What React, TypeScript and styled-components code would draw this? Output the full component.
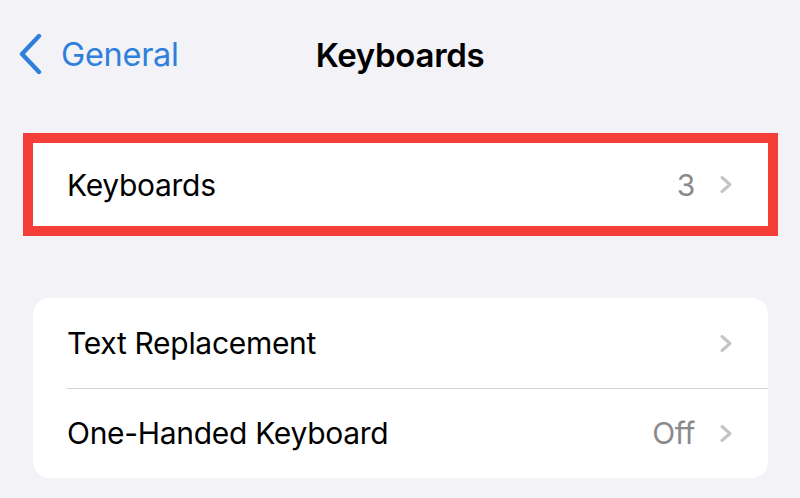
import React from 'react';
import styled, { createGlobalStyle } from 'styled-components';

const GlobalStyle = createGlobalStyle`
  html, body {
    margin: 0;
    padding: 0;
    background: #f2f2f7;
  }
  body {
    font-family: Inter, "Noto Sans", sans-serif;
    -webkit-font-smoothing: antialiased;
  }
`;

type RowProps = {
  label: string;
  value?: string;
  compact?: boolean;
};

const Chevron = () => (
  <ChevronSvg width="15" height="19" viewBox="0 0 15 19">
    <path d="M3 2.5 L11 9.5 L3 16.5" fill="none" stroke="#c4c4c7" strokeWidth="3" strokeLinecap="round" strokeLinejoin="round" />
  </ChevronSvg>
);

const Row = ({ label, value, compact }: RowProps) => (
  <RowWrapper compact={compact}>
    <Label>{label}</Label>
    {value && <Value>{value}</Value>}
    <Chevron />
  </RowWrapper>
);

const App = () => {
  return (
    <Screen>
      <GlobalStyle />
      <NavBar>
        <BackButton>
          <svg width="26" height="42" viewBox="0 0 26 42">
            <path d="M21 3 L4 21 L21 39" fill="none" stroke="#2f7fdc" strokeWidth="4.4" strokeLinecap="round" strokeLinejoin="round" />
          </svg>
          <BackLabel>General</BackLabel>
        </BackButton>
        <Title>Keyboards</Title>
      </NavBar>

      <Group highlighted>
        <Row label="Keyboards" value="3" compact />
      </Group>

      <Group>
        <Row label="Text Replacement" />
        <Row label="One-Handed Keyboard" value="Off" />
      </Group>
    </Screen>
  );
};

const Screen = styled.div`
  width: 800px;
  height: 498px;
  overflow: hidden;
  background: #f2f2f7;
`;

const NavBar = styled.div`
  position: relative;
  height: 110px;
  display: flex;
  align-items: center;
  justify-content: center;
`;

const BackButton = styled.div`
  position: absolute;
  left: 18px;
  top: 33px;
  display: flex;
  align-items: center;
  gap: 17px;
  color: #2f7fdc;
`;

const BackLabel = styled.span`
  font-size: 32.5px;
  letter-spacing: -0.3px;
`;

const Title = styled.h1`
  margin: 0;
  font-size: 33px;
  font-weight: 600;
  letter-spacing: -0.3px;
  color: #000;
`;

const Group = styled.div<{ highlighted?: boolean }>`
  margin: ${(p) => (p.highlighted ? '33px 32px 0 33px' : '72px 32px 0 33px')};
  background: #fff;
  border-radius: ${(p) => (p.highlighted ? '0' : '16px')};
  outline: ${(p) => (p.highlighted ? '10px solid #f33f38' : 'none')};
  overflow: hidden;
`;

const RowWrapper = styled.div<{ compact?: boolean }>`
  position: relative;
  height: ${(p) => (p.compact ? '83px' : '90px')};
  display: flex;
  align-items: center;
  padding: 0 34px;

  & + &::before {
    content: '';
    position: absolute;
    top: 0;
    left: 34px;
    right: 0;
    height: 1px;
    background: #d2d2d6;
  }
`;

const Label = styled.span`
  flex: 1;
  font-size: 30px;
  letter-spacing: -0.3px;
  color: #000;
`;

const Value = styled.span`
  font-size: 30px;
  letter-spacing: -0.4px;
  color: #8a8a8e;
  margin-right: 24px;
`;

const ChevronSvg = styled.svg`
  flex-shrink: 0;
`;

export default App;
